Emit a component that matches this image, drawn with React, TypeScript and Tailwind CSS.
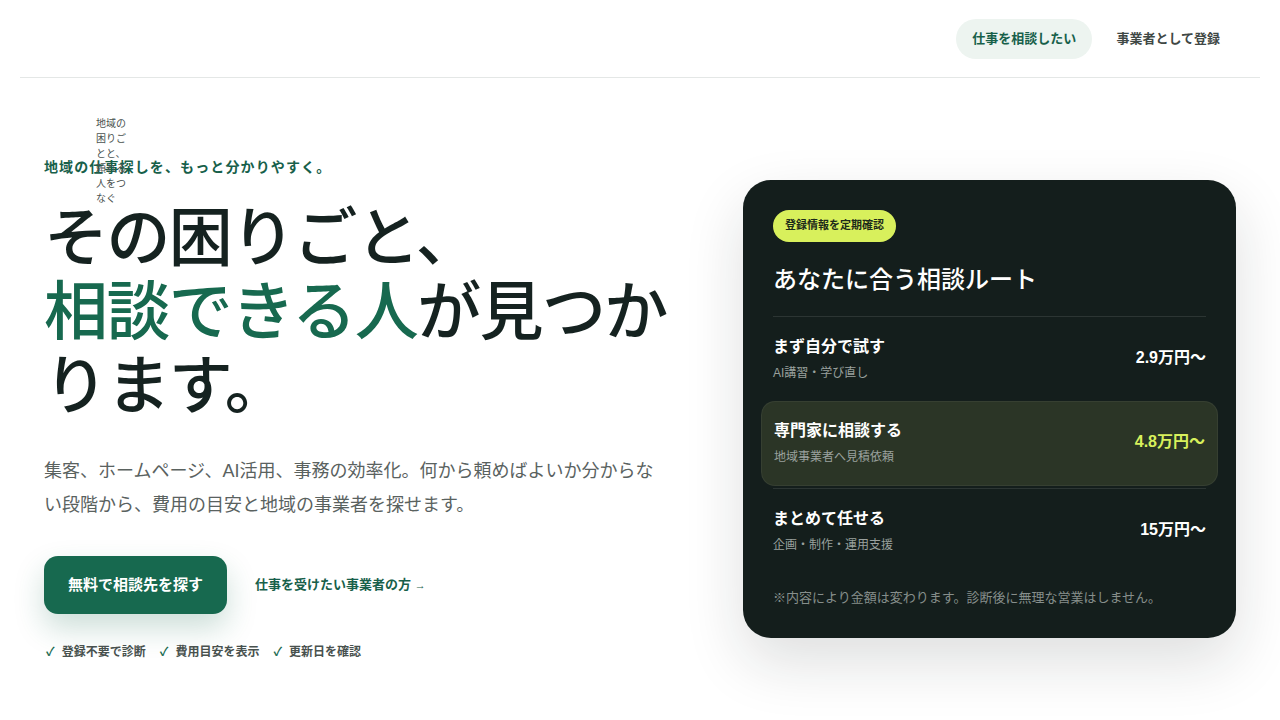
const ROUTES = [
  { title: 'まず自分で試す', sub: 'AI講習・学び直し', price: '2.9万円〜', active: false },
  { title: '専門家に相談する', sub: '地域事業者へ見積依頼', price: '4.8万円〜', active: true },
  { title: 'まとめて任せる', sub: '企画・制作・運用支援', price: '15万円〜', active: false },
]

const CHECKS = ['登録不要で診断', '費用目安を表示', '更新日を確認']

const font = { fontFamily: '"Liberation Sans", "Noto Sans CJK JP", sans-serif' }

function Header() {
  return (
    <header className="relative mx-5 flex h-[78px] items-center justify-end border-b border-[#e4e7e6] px-6">
      {/* logo tagline overflowing its narrow column, as in the page */}
      <div className="absolute left-[76px] top-[116px] w-[32px] text-[10px] leading-[15px] text-[#4a524f]">
        地域の困りごとと、頼れる人をつなぐ
      </div>
      <nav className="flex items-center gap-2">
        <a className="rounded-full bg-[#edf4f0] px-4 py-[10px] text-[13px] font-bold leading-5 text-[#17604a]">
          仕事を相談したい
        </a>
        <a className="rounded-full px-4 py-[10px] text-[13px] font-bold leading-5 text-[#3f4845]">
          事業者として登録
        </a>
      </nav>
    </header>
  )
}

function RouteCard() {
  return (
    <div className="rounded-[28px] bg-[#141e1c] px-[30px] pb-[31px] pt-[30px] shadow-[0_24px_60px_rgba(20,30,28,0.14)]">
      <span className="inline-flex h-8 items-center rounded-full bg-[#d8f05c] px-3 text-[11px] font-bold text-[#1c2a1a]">
        登録情報を定期確認
      </span>
      <h2 className="mt-[22px] border-b border-white/10 pb-[20px] text-[24px] font-medium leading-8 text-white">
        あなたに合う相談ルート
      </h2>
      <div className="flex flex-col">
        {ROUTES.map((r, i) => (
          <div
            key={r.title}
            className={
              r.active
                ? '-mx-3 flex items-center justify-between rounded-[14px] border border-white/5 bg-[#2b3526] px-3 pb-[19px] pt-[17px]'
                : `flex items-center justify-between pb-[19px] pt-[18px] ${i > 0 ? 'mt-[2px] border-t border-white/10' : ''}`
            }
          >
            <div>
              <div className="text-[16px] font-bold leading-6 text-white">{r.title}</div>
              <div className="mt-[5px] text-[12px] leading-[18px] text-[#9aa19e]">{r.sub}</div>
            </div>
            <div className={`text-[16px] font-bold ${r.active ? 'text-[#d8f05c]' : 'text-white'}`}>{r.price}</div>
          </div>
        ))}
      </div>
      <p className="mt-[16px] text-[13px] leading-[18px] text-[#868e8b]">
        ※内容により金額は変わります。診断後に無理な営業はしません。
      </p>
    </div>
  )
}

export default function App() {
  return (
    <div className="min-h-screen bg-white" style={font}>
      <Header />
      <main className="mx-5 grid grid-cols-[640px_493px] items-center justify-between px-6 py-[79px]">
        <div>
          <p className="text-[14px] font-bold leading-5 tracking-[0.08em] text-[#17604a]">
            地域の仕事探しを、もっと分かりやすく。
          </p>
          <h1 className="mt-6 text-[64px] font-medium leading-[74px] tracking-[-0.025em] text-[#152220]">
            その困りごと、
            <br />
            <span className="text-[#17694f]">相談できる人</span>が見つかります。
          </h1>
          <p className="mt-[31px] max-w-[620px] text-[18px] leading-[34px] text-[#5a625f]">
            集客、ホームページ、AI活用、事務の効率化。何から頼めばよいか分からない段階から、費用の目安と地域の事業者を探せます。
          </p>
          <div className="mt-[34px] flex items-center gap-7">
            <a className="flex h-[58px] items-center rounded-[14px] bg-[#17694f] px-6 text-[15px] font-bold text-white shadow-[0_14px_30px_rgba(23,105,79,0.22)]">
              無料で相談先を探す
            </a>
            <a className="text-[13px] font-bold text-[#17604a]">
              仕事を受けたい事業者の方 <span className="text-[11px]">→</span>
            </a>
          </div>
          <ul className="mt-[30px] flex items-center gap-[14px] pl-[2px] text-[12px] font-bold leading-4 text-[#48514e]">
            {CHECKS.map(c => (
              <li key={c} className="flex items-center gap-[7px]">
                <span className="text-[#17694f]">✓</span>
                {c}
              </li>
            ))}
          </ul>
        </div>
        <RouteCard />
      </main>
    </div>
  )
}
